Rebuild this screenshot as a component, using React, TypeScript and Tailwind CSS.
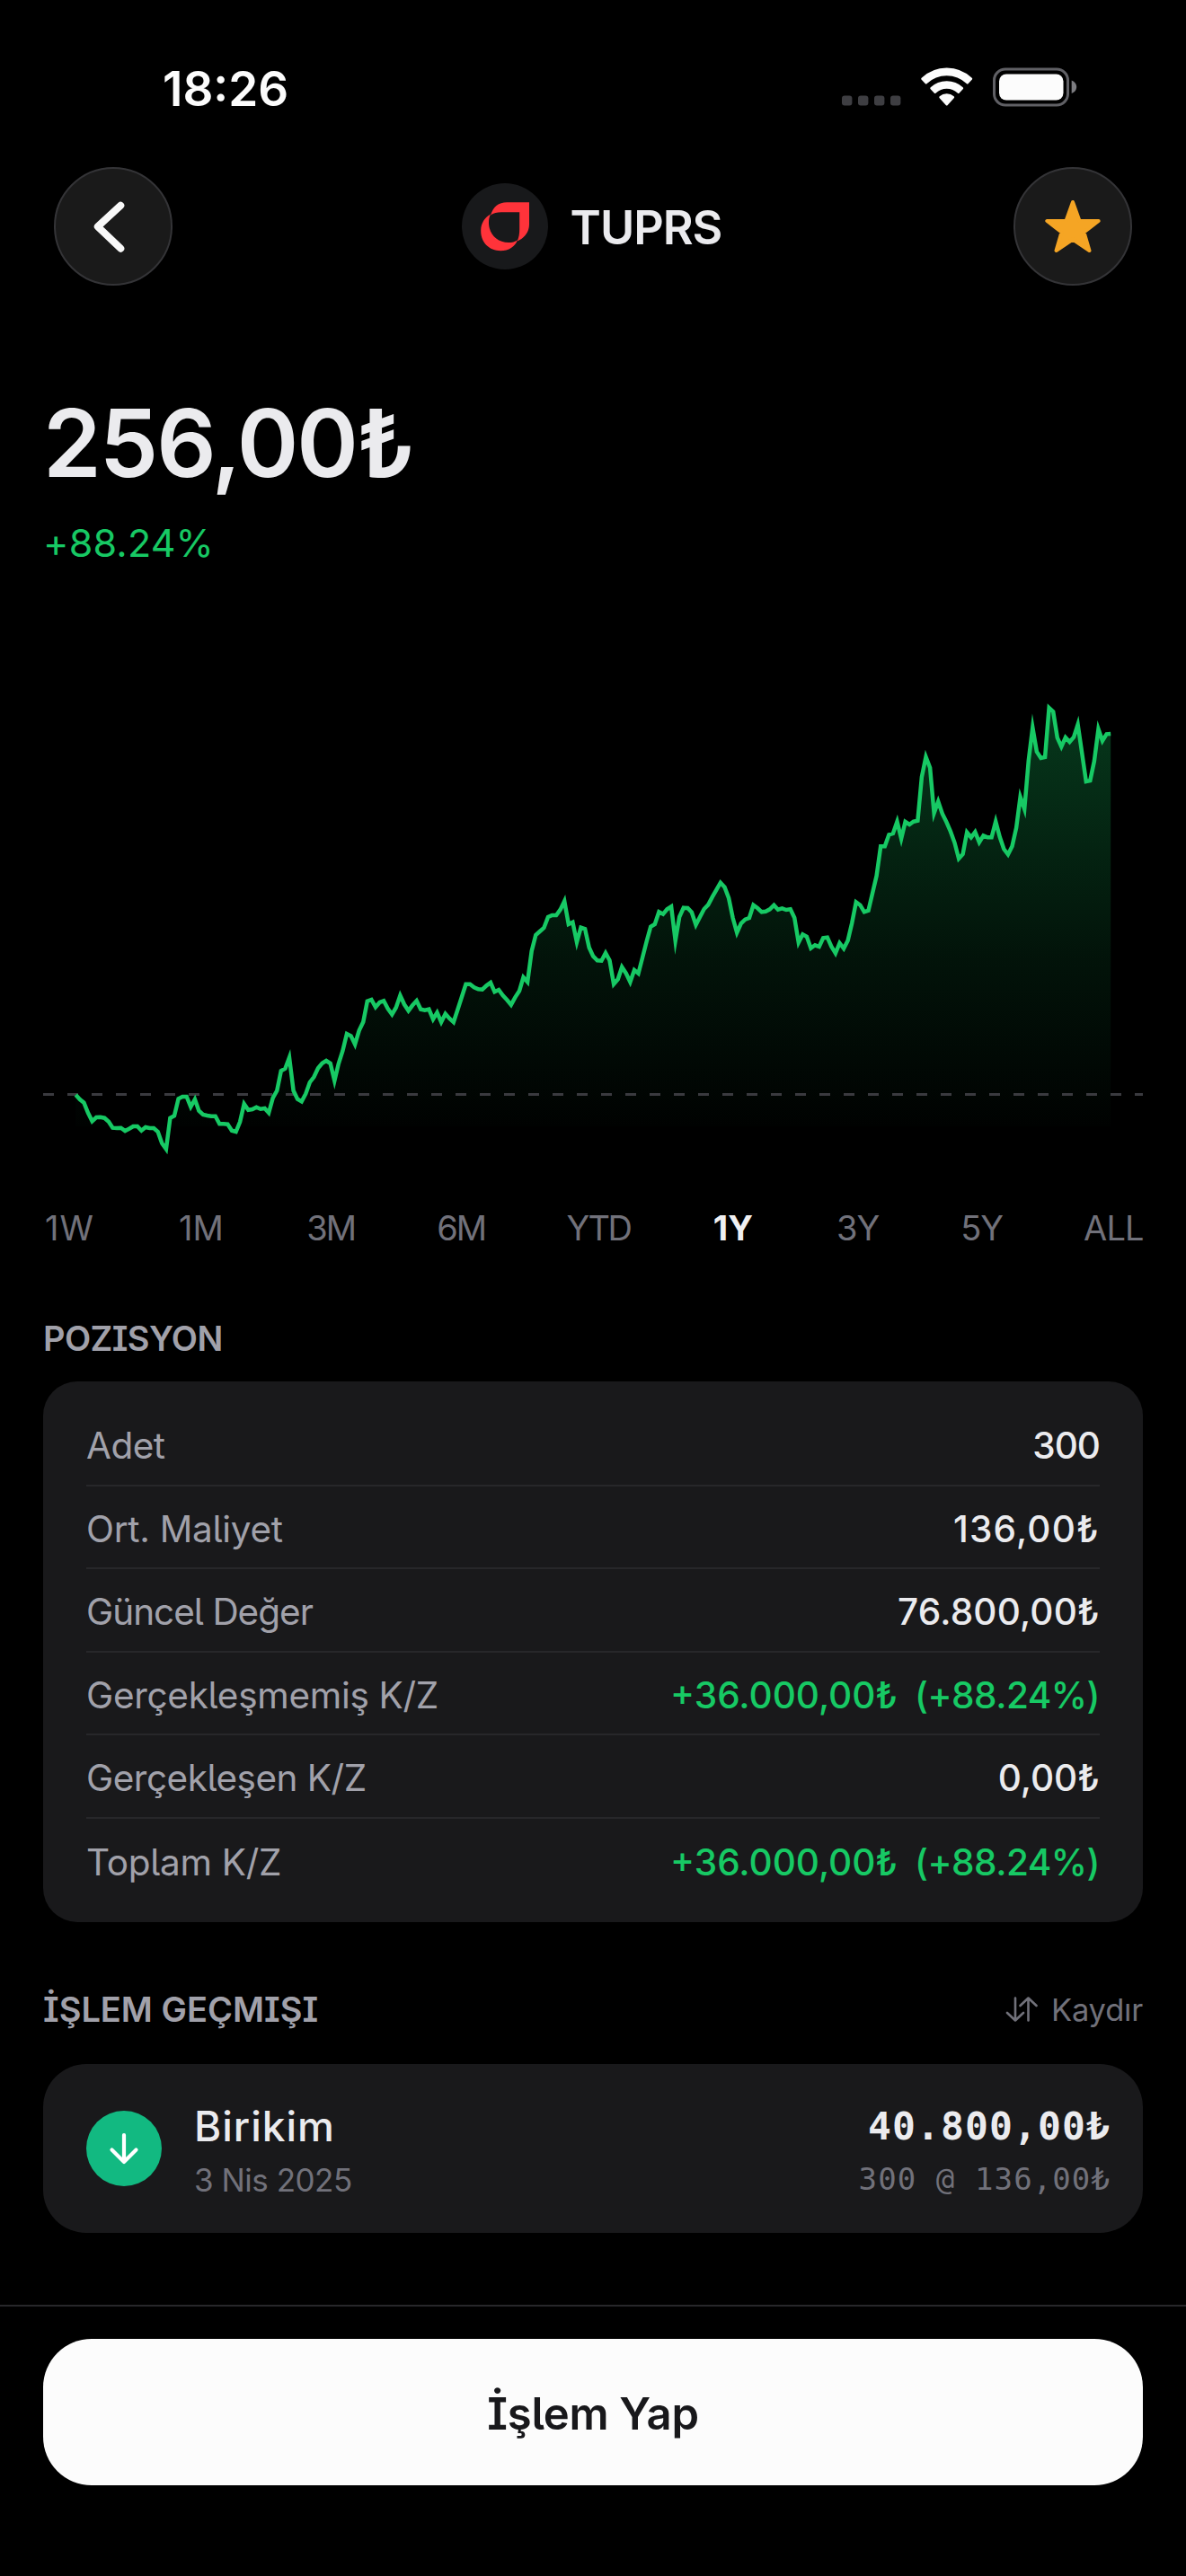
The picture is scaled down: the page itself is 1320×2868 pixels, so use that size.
const closes = [
  459, 464, 467.7, 479, 488.3, 484, 483.7, 484.7, 488.7, 495.7, 496, 495.7, 499, 496.7, 494, 494,
  498.7, 495, 496, 496, 500, 513, 519.3, 484.7, 482.3, 463.3, 461, 461, 472.3, 464, 476.7, 481,
  482, 482.7, 482.7, 491.3, 491.3, 491.7, 498.7, 500, 489, 469, 475.7, 475, 472.7, 474.7, 474, 479,
  462.3, 454.3, 432.3, 429.7, 417.3, 454.3, 463.7, 466.3, 457.7, 445, 439, 429.3, 423.7, 421, 424, 443.3,
  424.3, 410, 391, 393.3, 402.7, 387.3, 377.7, 354.7, 353, 361.3, 356, 354.3, 363, 369.3, 361.7, 348.3,
  358.3, 365.3, 359.3, 354.3, 363.7, 364.7, 363.7, 374.7, 367.3, 378, 368.7, 374, 378, 364, 349.7, 335.7,
  335.7, 339.3, 341.3, 341.7, 337.3, 334, 344.3, 342, 348.3, 353.3, 358.7, 350.3, 343.3, 328, 333.3, 299,
  281, 277, 273, 261, 259, 259, 252.7, 243.3, 269, 266.7, 289, 272.7, 274.3, 295, 304.7, 309.3,
  309.7, 301, 309.3, 335.7, 330.3, 316.7, 323.7, 333.3, 320, 323.7, 306, 288, 271.7, 269, 255.3, 257.7,
  252.3, 249.3, 287.3, 260.7, 250.7, 251, 255.7, 269.7, 260.7, 252, 247.3, 238.7, 230.7, 222.7, 227.7, 240,
  262.3, 278.3, 268, 263.7, 262, 247.7, 251, 255.3, 254.7, 252.3, 247.7, 252.7, 251.3, 253, 252.3, 261.7,
  289.3, 280.3, 282.7, 295.7, 292.3, 294, 284.3, 283.7, 294, 301.3, 290, 296, 287.3, 267.7, 244.3, 247.7,
  255.3, 253.7, 234.3, 215, 182.3, 182.3, 169.3, 168, 154.7, 173.7, 155, 158, 154.7, 153.7, 105, 82.7,
  94.7, 145.3, 132.3, 146, 155.3, 165.7, 178.3, 196, 191, 166.7, 172.3, 166.3, 177.7, 170.3, 172.3, 172.3,
  154.7, 172, 185.3, 191.3, 182.3, 161.7, 127.3, 140.7, 86.7, 50, 77, 84, 83, 28, 32.3, 61.3,
  71.3, 61, 66, 60.7, 46.7, 78.3, 110, 109, 87.3, 51.7, 64.7, 57.3, 57,
];

const line = closes.map((y, i) => `${(84.3 + i * 4.571).toFixed(1)},${y}`).join(' ');

const ranges = [
  { label: '1W', cls: 'w-[59px] tracking-[1px]' },
  { label: '1M', cls: 'w-[54px]' },
  { label: '3M', cls: 'w-[55px] tracking-[-2px]' },
  { label: '6M', cls: 'w-[55px] tracking-[-2px]' },
  { label: 'YTD', cls: 'w-[71px] tracking-[-2.500px]' },
  { label: '1Y', cls: 'w-[49px] font-bold text-[#f0f0f2]' },
  { label: '3Y', cls: 'w-[49px] tracking-[-1px]' },
  { label: '5Y', cls: 'w-[47px] tracking-[-1px]' },
  { label: 'ALL', cls: 'w-[66px] tracking-[-0.800px]' },
];

const position = [
  { label: 'Adet', labelCls: 'tracking-[-0.500px]', value: '300', valueCls: 'tracking-[-1px]' },
  { label: 'Ort. Maliyet', labelCls: 'tracking-[-0.300px]', value: '136,00₺', valueCls: 'tracking-[1.200px]' },
  { label: 'Güncel Değer', labelCls: 'tracking-[-1px]', value: '76.800,00₺', valueCls: 'tracking-[0.200px]' },
  { label: 'Gerçekleşmemiş K/Z', labelCls: 'tracking-[-0.300px]', value: '+36.000,00₺', valueCls: '', pct: '(+88.24%)' },
  { label: 'Gerçekleşen K/Z', labelCls: 'tracking-[-0.500px]', value: '0,00₺', valueCls: '' },
  { label: 'Toplam K/Z', labelCls: 'tracking-[-0.300px]', value: '+36.000,00₺', valueCls: '', pct: '(+88.24%)' },
];

function StatusBar(){
  return (
    <div className="h-[186px] pt-[67px] pl-[181px] pr-[121px]">
      <div className="flex h-[60px] items-center justify-between">
        <span className="pt-[3px] text-[53px] leading-[60px] font-semibold text-[#fcfcfc]">18:26</span>
        <svg width="262" height="44" viewBox="0 0 262 44" fill="none">
          {[0, 18, 36, 54].map(x => (
            <rect key={x} x={x} y="31.5" width="11.4" height="11" rx="3" fill="#3e3e42" />
          ))}
          <path d="M116.700 0.500a41.500 41.500 0 0 1 28 11.200q1 1 0 2l-4 4.200q-1 1-2 0a32 32 0 0 0-44 0q-1 1-2 0l-4-4.200q-1-1 0-2a41.500 41.500 0 0 1 28-11.200z" fill="#fcfcfc" />
          <path d="M116.700 15.200a26.500 26.500 0 0 1 18 7q1 1 0 2l-4 4.200q-1 1-2 0a17.500 17.500 0 0 0-24 0q-1 1-2 0l-4-4.200q-1-1 0-2a26.500 26.500 0 0 1 18-7z" fill="#fcfcfc" />
          <path d="M116.700 29.300a12.500 12.500 0 0 1 8 3q1 1 0 2l-7 7.600q-1 1-2 0l-7-7.600q-1-1 0-2a12.500 12.500 0 0 1 8-3z" fill="#fcfcfc" />
          <rect x="169.500" y="2" width="82" height="40" rx="12.500" stroke="#606065" strokeWidth="3" />
          <rect x="175" y="7.500" width="71.500" height="29" rx="8" fill="#fcfcfc" />
          <path d="M255.700 14.500c3.500 1.300 5.500 4 5.500 7.300s-2 6-5.500 7.300z" fill="#7c7c80" />
        </svg>
      </div>
    </div>
  );
}

function Header(){
  return (
    <div className="flex h-[132px] items-center justify-between px-[60px]">
      <button className="flex size-[132px] items-center justify-center rounded-full border-2 border-[#343437] bg-[#1a1a1a]">
        <svg width="128" height="128" viewBox="0 0 128 128" fill="none">
          <path d="M72.300 40.700 46.800 64.300l25.500 24.400" stroke="#f8f8f8" strokeWidth="8" strokeLinecap="round" strokeLinejoin="round" />
        </svg>
      </button>
      <div className="mr-[3px] flex items-center gap-[25px]">
        <div className="size-24 rounded-full bg-[#18191b]">
          <svg width="96" height="96" viewBox="0 0 96 96">
            <path d="M32 35.500C35 26 41 21.200 50 21.200h25V46c0 8-5 15-13.300 18.500C63.500 60 64.200 56.500 64.200 51V32.200H44c-5 0-8.500.8-12 3.300z" fill="#ff333a" />
            <path d="M32 34.500C25 38.500 21.200 45 21.200 53c0 13 9.300 22.200 22 22.200 9 0 16-4.500 18.800-12-3 2-6 2.800-10 2.800C39 66 30 56.500 30 43.500c0-3.500.6-6 2-9z" fill="#ff333a" />
          </svg>
        </div>
        <span className="pt-[3px] text-[52px] leading-[60px] font-semibold tracking-[-1px] text-[#ebebee]">TUPRS</span>
      </div>
      <button className="flex size-[132px] items-center justify-center rounded-full border-2 border-[#343437] bg-[#1a1a1a]">
        <svg width="128" height="128" viewBox="0 0 128 128">
          <path d="M64 37 71.500 58H92.700L76.500 70.500 82.500 91 64 78.500 45.500 91 51.500 70.500 35.300 58H56.500z" fill="#f5a524" stroke="#f5a524" strokeWidth="4" strokeLinejoin="round" />
        </svg>
      </button>
    </div>
  );
}

function PriceChart(){
  return (
    <svg className="mt-[126px] block" width="1320" height="530" viewBox="0 0 1320 530" fill="none">
      <defs>
        <linearGradient id="area" gradientUnits="userSpaceOnUse" x1="0" y1="28" x2="0" y2="494">
          <stop offset="0" stopColor="#17c964" stopOpacity="0.280" />
          <stop offset="0.600" stopColor="#17c964" stopOpacity="0.095" />
          <stop offset="1" stopColor="#17c964" stopOpacity="0.010" />
        </linearGradient>
      </defs>
      <polygon points={`84.300,494 ${line} 1236.200,494`} fill="url(#area)" />
      <line x1="48" y1="458.500" x2="1272" y2="458.500" stroke="#3a3a3f" strokeWidth="3" strokeDasharray="12 15" />
      <polyline points={line} stroke="#17c964" strokeWidth="4.500" strokeLinejoin="miter" strokeMiterlimit="10" />
    </svg>
  );
}

export default function App(){
  return (
    <div className="flex h-[2868px] w-[1320px] flex-col overflow-hidden bg-black font-['Inter',sans-serif]">
      <StatusBar />
      <Header />

      <div className="mt-[115px] px-12">
        <div className="text-[104px] leading-[120px] font-semibold tracking-[-2px] text-[#ebebee]">256,00₺</div>
        <div className="mt-[21px] text-[43px] leading-[60px] tracking-[0.200px] text-[#17c964]">+88.24%</div>
      </div>

      <PriceChart />

      <div className="mt-[47px] flex justify-between px-12 text-[38px] leading-[60px] text-[#71717a]">
        {ranges.map(r => (
          <span key={r.label} className={`text-center whitespace-nowrap ${r.cls}`}>{r.label}</span>
        ))}
      </div>

      <div className="mt-[68px] px-12">
        <h2 className="text-[38px] leading-[50px] font-semibold tracking-[-0.600px] text-[#a1a1aa] [font-feature-settings:'cv08']">POZISYON</h2>
        <div className="mt-[23px] h-[602px] rounded-[38px] bg-[#19191b] px-12 pt-[24px]">
          {position.map((row, i) => (
            <div key={row.label} className={`flex h-[92.600px] items-center justify-between pt-1.5 text-[40.500px] ${i < 5 ? 'border-b-2 border-[#27272a]' : ''}`}>
              <span className={`text-[#a1a1aa] [font-feature-settings:'cv05'] ${row.labelCls}`}>{row.label}</span>
              <span className={`flex gap-[19px] font-medium ${row.pct ? 'text-[#17c964]' : 'text-[#ebebee]'}`}>
                <span className={row.valueCls}>{row.value}</span>
                {row.pct && <span className="tracking-[-0.500px]">{row.pct}</span>}
              </span>
            </div>
          ))}
        </div>
      </div>

      <div className="mt-[72px] px-12">
        <div className="flex h-[50px] items-center justify-between">
          <h2 className="text-[38px] leading-[50px] font-semibold text-[#a1a1aa] [font-feature-settings:'cv08']">İŞLEM GEÇMIŞI</h2>
          <div className="flex items-center gap-[15px] text-[34.500px] leading-[50px] tracking-[-0.200px] text-[#71717a]">
            <svg width="36" height="28" viewBox="0 0 36 28" fill="none" stroke="#71717a" strokeWidth="2.600" strokeLinecap="round" strokeLinejoin="round">
              <path d="M11 1.500v25M2 18l9 8.500 9-8.500M25.500 26.500v-25M16.500 10l9-8.500 9 8.500" />
            </svg>
            <span className="pt-0.5">Kaydır</span>
          </div>
        </div>
        <div className="mt-9 flex h-[188px] items-center rounded-[48px] bg-[#19191b] pr-9 pl-12">
          <div className="flex size-[84px] items-center justify-center rounded-full bg-[#12b981]">
            <svg width="36" height="36" viewBox="0 0 36 36" fill="none" stroke="#fff" strokeWidth="4.200" strokeLinecap="round" strokeLinejoin="round">
              <path d="M18 3v30M4.500 19.500 18 33l13.500-13.500" />
            </svg>
          </div>
          <div className="ml-9 flex flex-col pt-[10px]">
            <span className="text-[46px] leading-[60px] font-medium tracking-[1px] text-[#ebebee]">Birikim</span>
            <span className="text-[35px] leading-[60px] tracking-[-0.500px] text-[#71717a]">3 Nis 2025</span>
          </div>
          <div className="ml-auto flex flex-col items-end pt-[8px] font-['DejaVu_Sans_Mono',monospace]">
            <span className="text-[43px] leading-[60px] font-bold tracking-[1.100px] text-[#ebebee]">40.800,00₺</span>
            <span className="text-[34px] leading-[58px] tracking-[1.100px] text-[#71717a]">300 @ 136,00₺</span>
          </div>
        </div>
      </div>

      <div className="mt-[80px] border-t-2 border-[#27272a] px-12 pt-9">
        <button className="flex h-[163px] w-full items-center justify-center rounded-[54px] bg-[#fcfcfc] pt-1 text-[49px] font-semibold tracking-[-0.300px] text-[#18181b] [font-feature-settings:'cv05','cv08']">
          İşlem Yap
        </button>
      </div>
    </div>
  );
}
